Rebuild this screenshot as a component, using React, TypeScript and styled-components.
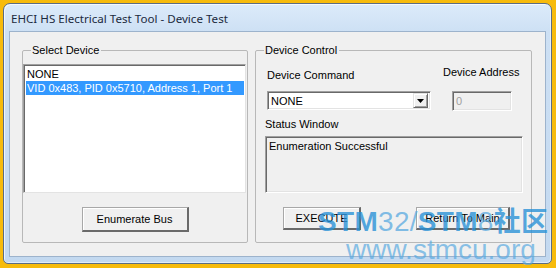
import React from "react";
import styled, { createGlobalStyle } from "styled-components";

const Global = createGlobalStyle`
  html, body { margin: 0; padding: 0; background: #f7bb0c; }
  * { box-sizing: border-box; }
`;

const Frame = styled.div`
  position: relative;
  width: 556px;
  height: 268px;
  background: #f7bb0c;
  padding: 3px 4px 4px 3px;
  display: flex;
`;

const Window = styled.div`
  flex: 1;
  display: flex;
  flex-direction: column;
  border: 1px solid #5b6d84;
  border-radius: 7px 7px 5px 5px;
  background: linear-gradient(to bottom, #dcebfa 0px, #cde0f4 28px, #c3d9f0 100%);
  box-shadow: inset 1px 1px 0 rgba(255,255,255,0.7), inset -1px -1px 0 rgba(255,255,255,0.5);
  overflow: hidden;
`;

const TitleBar = styled.div`
  height: 28px;
  flex: none;
  display: flex;
  align-items: center;
  padding-left: 7px;
  padding-top: 1px;
  font-family: "Noto Sans", "DejaVu Sans", sans-serif;
  font-size: 11.6px;
  color: #1b2a3d;
`;

const Client = styled.div`
  flex: 1;
  margin: 0 6px 7px 6px;
  background: #f0f0f0;
  box-shadow: 0 0 0 1px #9db3cc;
  display: flex;
  gap: 7px;
  padding: 12px 13px 13px 12px;
  font-family: "Liberation Sans", Arial, sans-serif;
  font-size: 11px;
  color: #000;
`;

const Group = styled.fieldset<{ $w: number }>`
  width: ${(p) => p.$w}px;
  flex: none;
  margin: 0;
  padding: 0;
  border: 1px solid #b8b8b8;
  border-radius: 2px;
  display: flex;
  flex-direction: column;
  min-width: 0;
`;

const Legend = styled.legend`
  margin-left: 8px;
  padding: 0 2px 0 1px;
  font-size: 11px;
  line-height: 13px;
  color: #000;
`;

const ListBox = styled.div`
  margin: 7px 1px 0 0;
  height: 129px;
  background: #fff;
  border-top: 1px solid #a0a0a0;
  border-left: 1px solid #a0a0a0;
  border-right: 1px solid #e3e3e3;
  border-bottom: 1px solid #e3e3e3;
  box-shadow: inset 1px 1px 0 #696969;
  padding: 2px 1px 0 2px;
`;

const ListItem = styled.div<{ $sel?: boolean }>`
  height: 14px;
  line-height: 14px;
  padding-left: 1px;
  white-space: nowrap;
  background: ${(p) => (p.$sel ? "#3399ff" : "transparent")};
  color: ${(p) => (p.$sel ? "#fff" : "#000")};
`;

const Button = styled.button<{ $w: number; $h: number }>`
  width: ${(p) => p.$w}px;
  height: ${(p) => p.$h}px;
  background: #f0f0f0;
  border-style: solid;
  border-width: 1px 2px 2px 1px;
  border-color: #a8a8a8 #6a6a6a #6a6a6a #a8a8a8;
  box-shadow: inset 1px 1px 0 #fff;
  font-family: "Liberation Sans", Arial, sans-serif;
  font-size: 11px;
  color: #000;
  padding: 0;
  display: flex;
  align-items: center;
  justify-content: center;
`;

const CenterRow = styled.div`
  display: flex;
  justify-content: center;
  margin-top: 14px;
`;

const TopRow = styled.div`
  display: flex;
  align-items: flex-start;
`;

const Col = styled.div<{ $w: number; $ml: number }>`
  width: ${(p) => p.$w}px;
  margin-left: ${(p) => p.$ml}px;
  display: flex;
  flex-direction: column;
`;

const Label = styled.div<{ $mt?: number; $ml?: number }>`
  height: 13px;
  line-height: 13px;
  margin-top: ${(p) => p.$mt ?? 0}px;
  margin-left: ${(p) => p.$ml ?? 0}px;
  white-space: nowrap;
  color: #000;
`;

const Combo = styled.div`
  margin-top: 9px;
  height: 19px;
  background: #fff;
  border-top: 1px solid #a0a0a0;
  border-left: 1px solid #a0a0a0;
  border-right: 1px solid #fff;
  border-bottom: 1px solid #fff;
  box-shadow: inset 1px 1px 0 #696969, inset -1px -1px 0 #e3e3e3;
  display: flex;
  align-items: center;
  padding: 1px 2px 1px 3px;
`;

const ComboText = styled.span`
  flex: 1;
  line-height: 14px;
`;

const DropBtn = styled.div`
  width: 15px;
  height: 15px;
  background: #f0f0f0;
  border-style: solid;
  border-width: 1px;
  border-color: #e3e3e3 #696969 #696969 #e3e3e3;
  box-shadow: inset 1px 1px 0 #fff, inset -1px -1px 0 #a0a0a0;
  display: flex;
  align-items: center;
  justify-content: center;
`;

const Edit = styled.div`
  margin-top: 12px;
  height: 20px;
  background: #f0f0f0;
  border-top: 1px solid #a0a0a0;
  border-left: 1px solid #a0a0a0;
  border-right: 1px solid #fff;
  border-bottom: 1px solid #fff;
  box-shadow: inset 1px 1px 0 #696969, inset -1px -1px 0 #e3e3e3;
  color: #a0a0a0;
  padding: 2px 0 0 3px;
  line-height: 14px;
`;

const StatusBox = styled.div`
  margin: 5px 8px 0 9px;
  height: 57px;
  background: #f0f0f0;
  border-top: 1px solid #a0a0a0;
  border-left: 1px solid #a0a0a0;
  border-right: 1px solid #fff;
  border-bottom: 1px solid #fff;
  box-shadow: inset 1px 1px 0 #696969, inset -1px -1px 0 #e3e3e3;
  padding: 2px 0 0 3px;
  line-height: 14px;
`;

const ButtonRow = styled.div`
  display: flex;
  margin-top: 14px;
  padding-left: 27px;
  gap: 55px;
`;

const Watermark = styled.div`
  position: absolute;
  left: 318px;
  top: 204px;
  pointer-events: none;
  font-family: "Liberation Sans", Arial, "Noto Sans CJK SC", sans-serif;
  color: rgba(40, 145, 215, 0.78);
  display: flex;
  flex-direction: column;
  align-items: flex-start;
`;

const WmLine1 = styled.div`
  font-size: 28px;
  line-height: 32px;
  white-space: nowrap;
  letter-spacing: 0.3px;
`;

const Bold = styled.span`
  font-weight: bold;
`;

const Light = styled.span`
  color: rgba(90, 170, 225, 0.75);
`;

const WmLine2 = styled.div`
  font-size: 28px;
  line-height: 24px;
  margin-left: 28px;
  color: rgba(90, 170, 225, 0.7);
  white-space: nowrap;
`;

const CJK = styled.span`
  font-family: "Noto Sans CJK SC", sans-serif;
  font-weight: bold;
  font-size: 27px;
`;

export default function App() {
  return (
    <>
      <Global />
      <Frame>
        <Window>
          <TitleBar>EHCI HS Electrical Test Tool - Device Test</TitleBar>
          <Client>
            <Group $w={226}>
              <Legend>Select Device</Legend>
              <ListBox>
                <ListItem>NONE</ListItem>
                <ListItem $sel>VID 0x483, PID 0x5710, Address 1, Port 1</ListItem>
              </ListBox>
              <CenterRow>
                <Button $w={107} $h={25}>Enumerate Bus</Button>
              </CenterRow>
            </Group>
            <Group $w={277}>
              <Legend>Device Control</Legend>
              <TopRow>
                <Col $w={164} $ml={11}>
                  <Label $mt={12}>Device Command</Label>
                  <Combo>
                    <ComboText>NONE</ComboText>
                    <DropBtn>
                      <svg width="7" height="4" viewBox="0 0 7 4">
                        <path d="M0 0h7L3.5 4z" fill="#000" />
                      </svg>
                    </DropBtn>
                  </Combo>
                </Col>
                <Col $w={60} $ml={21}>
                  <Label $mt={9} $ml={-9}>Device Address</Label>
                  <Edit>0</Edit>
                </Col>
              </TopRow>
              <Label $mt={7} $ml={9}>Status Window</Label>
              <StatusBox>Enumeration Successful</StatusBox>
              <ButtonRow>
                <Button $w={78} $h={23}>EXECUTE</Button>
                <Button $w={94} $h={23}>Return To Main</Button>
              </ButtonRow>
            </Group>
          </Client>
        </Window>
        <Watermark>
          <WmLine1>
            <Bold>STM</Bold>
            <Light>32/</Light>
            <Bold>STM</Bold>
            <Light>8</Light>
            <CJK>社区</CJK>
          </WmLine1>
          <WmLine2>www.stmcu.org</WmLine2>
        </Watermark>
      </Frame>
    </>
  );
}
